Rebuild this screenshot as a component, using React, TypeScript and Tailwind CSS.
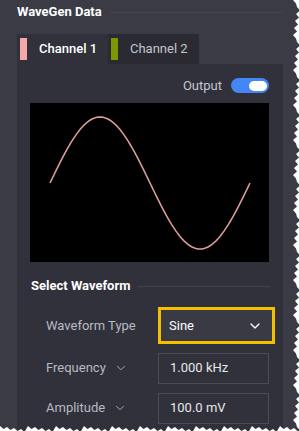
import { ChevronDown } from 'lucide-react';

const Swatch = ({ color }: { color: string }) => (
  <div className={`h-[22px] w-[7px] ${color}`} />
);

const Tab = ({
  label,
  swatch,
  active,
}: {
  label: string;
  swatch: string;
  active?: boolean;
}) => (
  <div
    className={`flex h-[30px] w-[91px] items-center gap-x-[12px] pl-[3px] ${
      active ? 'bg-[#30313a] font-medium text-white' : 'bg-[#2a2b32] text-[#c4c5cc]'
    }`}
  >
    <Swatch color={swatch} />
    <span className="text-[13px]">{label}</span>
  </div>
);

const SineWave = () => {
  const points: string[] = [];
  for (let i = 0; i <= 200; i += 2) {
    const x = 20 + i;
    const y = 80 - 66 * Math.sin((i / 200) * Math.PI * 2);
    points.push(`${x},${y.toFixed(2)}`);
  }
  return (
    <svg width="239" height="159" viewBox="0 0 239 159" className="block">
      <polyline points={points.join(' ')} fill="none" stroke="#dc9a98" strokeWidth="1.6" />
    </svg>
  );
};

const Field = ({
  label,
  value,
  chevron,
}: {
  label: string;
  value: string;
  chevron?: boolean;
}) => (
  <div className="flex h-[40px] items-center">
    <div className="flex w-[128px] shrink-0 items-center gap-x-[8px] pl-[16px] text-[13px] text-[#b9bac2]">
      {label}
      {chevron && <ChevronDown size={14} strokeWidth={1.5} className="text-[#b9bac2]" />}
    </div>
    <div className="flex h-[31px] w-[111px] shrink-0 items-center border border-[#4a4b55] pl-[11px] text-[13px] text-[#e8e8ec]">
      {value}
    </div>
  </div>
);

const TornEdge = () => {
  const right: string[] = ['299,0'];
  for (let y = 0; y <= 428; y += 7) {
    const x = 293 + ((y * 7) % 5);
    right.push(`${x},${y}`, `${x + 3},${y + 3.5}`);
  }
  right.push('299,431');
  const bottom: string[] = ['0,431'];
  for (let x = 0; x <= 299; x += 7) {
    const y = 426 + ((x * 3) % 4);
    bottom.push(`${x},${y}`, `${x + 3.5},${y + 3}`);
  }
  bottom.push('299,431');
  return (
    <svg width="299" height="431" className="pointer-events-none absolute inset-0">
      <polygon points={right.join(' ')} fill="#ffffff" />
      <polygon points={bottom.join(' ')} fill="#ffffff" />
    </svg>
  );
};

export default function App() {
  return (
    <div
      className="relative h-[431px] w-[299px] overflow-hidden bg-[#3a3b45] pl-[17px]"
      style={{ fontFamily: 'Roboto, "Liberation Sans", sans-serif' }}
    >
      <div className="flex h-[24px] w-[266px] items-center gap-x-[8px]">
        <span className="text-[13px] font-bold text-white">WaveGen Data</span>
        <div className="h-px flex-1 bg-[#464751]" />
      </div>

      <div className="mt-[10px] flex">
        <Tab label="Channel 1" swatch="bg-[#f5a8a8]" active />
        <Tab label="Channel 2" swatch="bg-[#7b9800]" />
      </div>

      <div className="h-[400px] w-[266px] bg-[#30313a] px-[13px] pt-[14px]">
        <div className="flex h-[15px] items-center justify-end gap-x-[9px] pr-[1px]">
          <span className="text-[13px] text-[#c6c7ce]">Output</span>
          <div className="flex h-[15px] w-[38px] items-center justify-end rounded-full bg-[#4287f5] pr-[2px]">
            <div className="h-[10px] w-[18px] rounded-full bg-white" />
          </div>
        </div>

        <div className="mt-[10px] h-[159px] w-[239px] bg-black">
          <SineWave />
        </div>

        <div className="mt-[16px] flex h-[16px] items-center gap-x-[8px] pl-[1px]">
          <span className="text-[13px] font-bold text-white">Select Waveform</span>
          <div className="h-px flex-1 bg-[#41424c]" />
        </div>

        <div className="mt-[4px] flex h-[50px] items-start">
          <div className="mt-[9px] flex h-[37px] w-[128px] shrink-0 items-center pl-[16px] text-[13px] text-[#b9bac2]">
            Waveform Type
          </div>
          <div className="mt-[9px] flex h-[37px] w-[117px] shrink-0 items-center justify-between border-[3px] border-[#f5bf00] bg-[#393a44] pr-[9px] pl-[8px] text-[13px] text-white">
            Sine
            <ChevronDown size={16} strokeWidth={2} className="text-white" />
          </div>
        </div>

        <Field label="Frequency" value="1.000 kHz" chevron />
        <Field label="Amplitude" value="100.0 mV" chevron />
      </div>

      <TornEdge />
    </div>
  );
}
